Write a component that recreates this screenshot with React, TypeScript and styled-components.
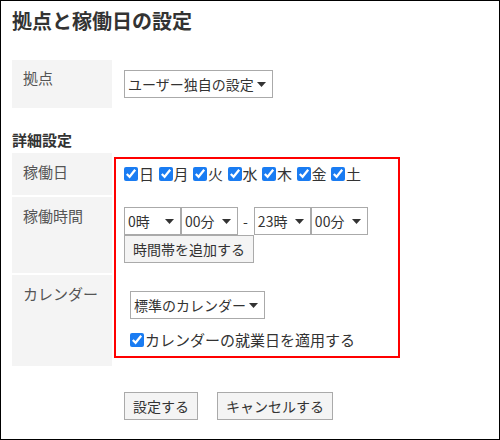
import { createGlobalStyle, styled } from "styled-components";

const GlobalStyle = createGlobalStyle`
  html, body {
    margin: 0;
    padding: 0;
    background: #fff;
  }
  body {
    font-family: "Noto Sans CJK JP", "Noto Sans", sans-serif;
  }
`;

const Page = styled.div`
  box-sizing: border-box;
  width: 500px;
  height: 440px;
  border: 1px solid #000;
  padding: 6px 11px 0;
  color: #333;
`;

const Title = styled.h1`
  margin: 0;
  font-size: 20px;
  line-height: 28px;
  font-weight: bold;
  color: #333;
`;

const FormGrid = styled.div<{ $rows: string }>`
  position: relative;
  display: grid;
  grid-template-columns: 100px 1fr;
  grid-template-rows: ${({ $rows }) => $rows};
  row-gap: 2px;
`;

const BaseSection = styled(FormGrid)`
  margin-top: 25px;
`;

const LabelCell = styled.div`
  box-sizing: border-box;
  background: #f4f4f4;
  padding: 8px 11px;
  font-size: 15px;
  line-height: 22px;
  color: #555;
`;

const ValueCell = styled.div<{ $indent?: number }>`
  box-sizing: border-box;
  display: flex;
  padding-left: ${({ $indent }) => 12 + ($indent ?? 0)}px;
`;

const CenterCell = styled(ValueCell)`
  align-items: center;
`;

const StackCell = styled(ValueCell)<{ $top: number }>`
  flex-direction: column;
  align-items: flex-start;
  padding-top: ${({ $top }) => $top}px;
`;

const SubHeading = styled.h2`
  margin: 21px 0 2px;
  font-size: 15px;
  line-height: 22px;
  font-weight: bold;
  color: #333;
`;

const Highlight = styled.div`
  position: absolute;
  left: 102px;
  top: 4px;
  width: 286px;
  height: 201px;
  box-sizing: border-box;
  border: 2px solid #ff0000;
  pointer-events: none;
`;

const Dropdown = styled.div<{ $width: number }>`
  box-sizing: border-box;
  display: flex;
  align-items: center;
  justify-content: space-between;
  width: ${({ $width }) => $width}px;
  height: 28px;
  padding: 0 6px 0 3px;
  border: 1px solid #aaa;
  background: #fff;
  font-size: 14px;
  line-height: 20px;
  color: #333;
  white-space: nowrap;
`;

const Arrow = () => (
  <svg width="9" height="5" viewBox="0 0 9 5">
    <polygon points="0,0 9,0 4.5,5" fill="#333" />
  </svg>
);

const TimeRow = styled.div`
  display: flex;
  align-items: center;
`;

const Dash = styled.span`
  margin: 0 6px 0 5px;
  font-size: 14px;
  color: #333;
`;

const Button = styled.button`
  box-sizing: border-box;
  height: 28px;
  padding: 0 8px;
  border: 1px solid #aaa;
  border-radius: 0;
  background: #f4f4f4;
  font-family: inherit;
  font-size: 14px;
  line-height: 20px;
  color: #333;
  cursor: pointer;
`;

const DayList = styled.div`
  display: flex;
  align-items: center;
  gap: 4.5px;
`;

const CheckLabel = styled.label<{ $spaced?: boolean }>`
  display: inline-flex;
  align-items: center;
  font-size: 15px;
  line-height: 22px;
  color: #333;
  margin-top: ${({ $spaced }) => ($spaced ? "10px" : "0")};
`;

const Check = styled.input.attrs({ type: "checkbox" })`
  width: 14px;
  height: 14px;
  margin: 0 1px 0 0;
  accent-color: #1a7cf2;
`;

const Actions = styled.div`
  display: flex;
  gap: 19px;
  margin-top: 26px;
  padding-left: 112px;
`;

const days = ["日", "月", "火", "水", "木", "金", "土"];

const App = () => {
  return (
    <>
      <GlobalStyle />
      <Page>
        <Title>拠点と稼働日の設定</Title>

        <BaseSection $rows="48px">
          <LabelCell style={{ paddingTop: 7 }}>拠点</LabelCell>
          <CenterCell>
            <Dropdown $width={149}>
              <span>ユーザー独自の設定</span>
              <Arrow />
            </Dropdown>
          </CenterCell>
        </BaseSection>

        <SubHeading>詳細設定</SubHeading>

        <FormGrid $rows="42px 76px 91px">
          <LabelCell>稼働日</LabelCell>
          <CenterCell>
            <DayList>
              {days.map((day) => (
                <CheckLabel key={day}>
                  <Check defaultChecked />
                  {day}
                </CheckLabel>
              ))}
            </DayList>
          </CenterCell>

          <LabelCell>稼働時間</LabelCell>
          <StackCell $top={10}>
            <TimeRow>
              <Dropdown $width={57}>
                <span>0時</span>
                <Arrow />
              </Dropdown>
              <Dropdown $width={57}>
                <span>00分</span>
                <Arrow />
              </Dropdown>
              <Dash>-</Dash>
              <Dropdown $width={57}>
                <span>23時</span>
                <Arrow />
              </Dropdown>
              <Dropdown $width={57}>
                <span>00分</span>
                <Arrow />
              </Dropdown>
            </TimeRow>
            <Button>時間帯を追加する</Button>
          </StackCell>

          <LabelCell>カレンダー</LabelCell>
          <StackCell $top={16} $indent={6}>
            <Dropdown $width={135}>
              <span>標準のカレンダー</span>
              <Arrow />
            </Dropdown>
            <CheckLabel $spaced>
              <Check defaultChecked />
              カレンダーの就業日を適用する
            </CheckLabel>
          </StackCell>

          <Highlight />
        </FormGrid>

        <Actions>
          <Button>設定する</Button>
          <Button>キャンセルする</Button>
        </Actions>
      </Page>
    </>
  );
};

export default App;
